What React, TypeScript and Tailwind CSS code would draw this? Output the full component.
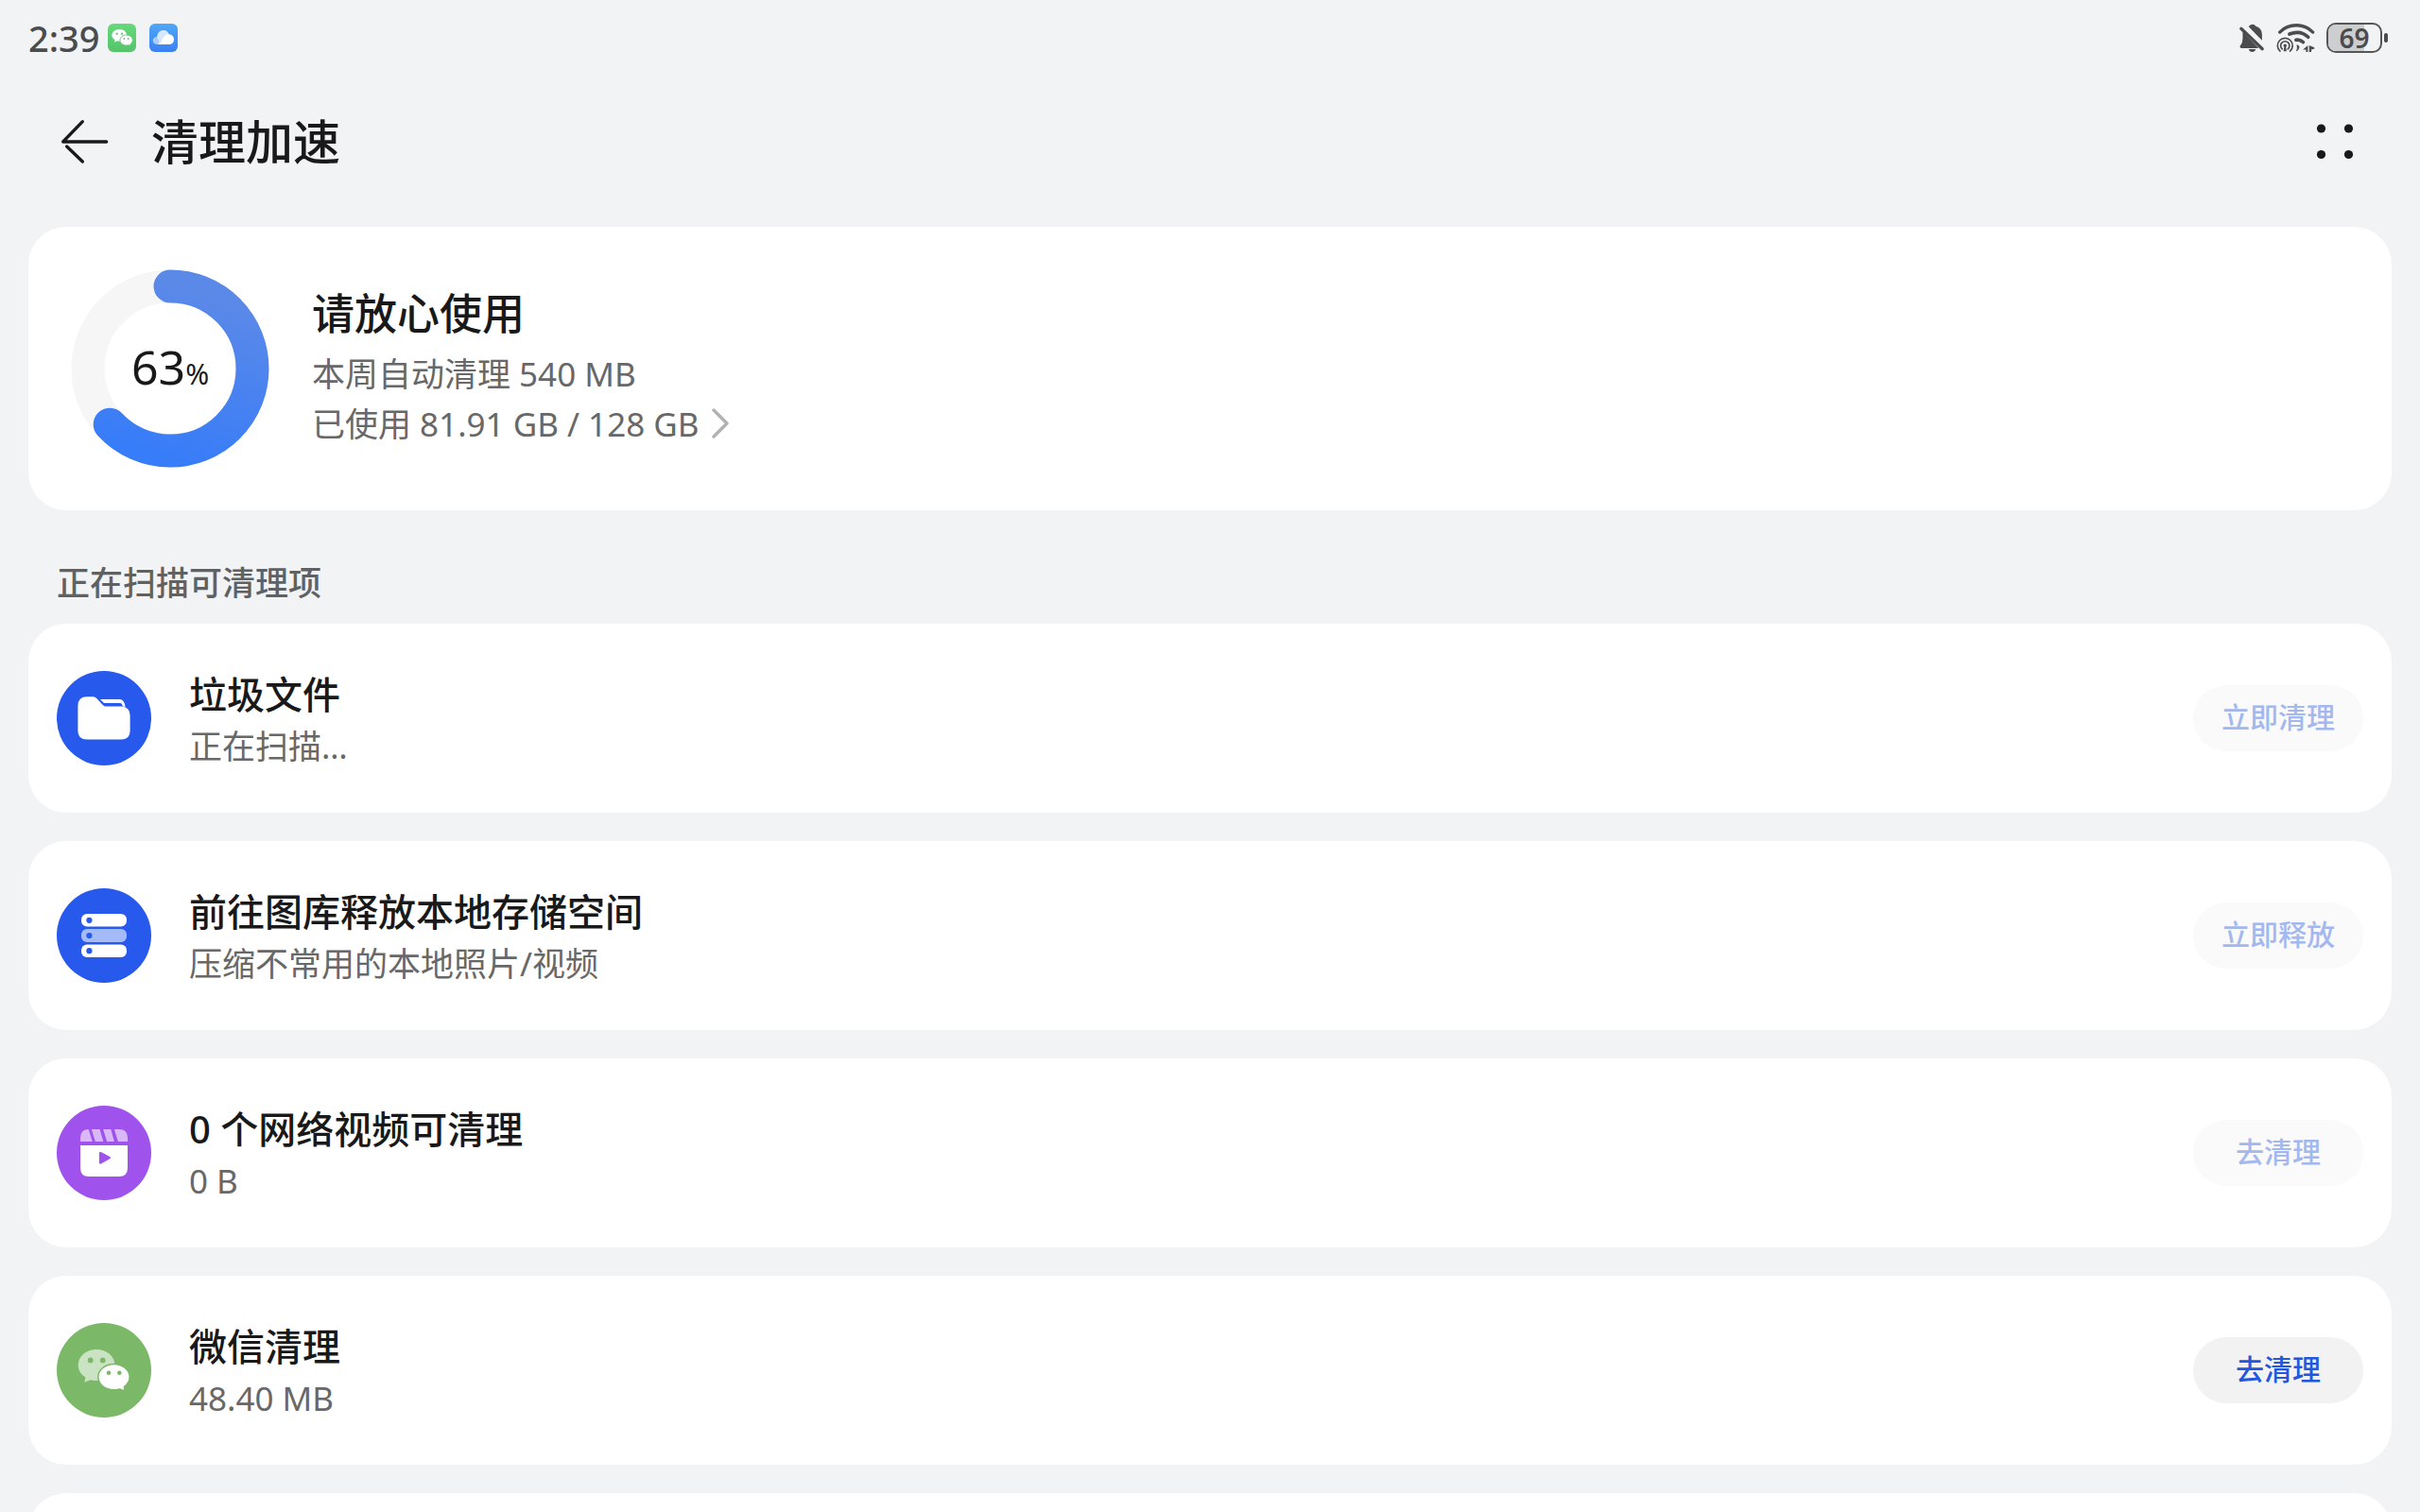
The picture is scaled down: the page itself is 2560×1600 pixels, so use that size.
import React from 'react';

const RING_RADIUS = 87;
const RING_LENGTH = 2 * Math.PI * RING_RADIUS;
const USED_PERCENT = 63;

type CleanItem = {
  title: string;
  detail: string;
  action: string;
  disabled: boolean;
  icon: React.ReactNode;
};

const ITEMS: CleanItem[] = [
  { title: '垃圾文件', detail: '正在扫描…', action: '立即清理', disabled: true, icon: <FolderIcon /> },
  { title: '前往图库释放本地存储空间', detail: '压缩不常用的本地照片/视频', action: '立即释放', disabled: true, icon: <StorageIcon /> },
  { title: '0 个网络视频可清理', detail: '0 B', action: '去清理', disabled: true, icon: <VideoIcon /> },
  { title: '微信清理', detail: '48.40 MB', action: '去清理', disabled: false, icon: <ChatIcon /> }];


function FolderIcon() {
  return (
    <svg viewBox="0 0 100 100" className="size-[100px] shrink-0" aria-hidden="true">
      <circle cx="50" cy="50" r="50" fill="#2759ec" />
      <path d="M46 30H66.5Q71.5 30 72.5 38L69.8 37.4Q69.5 34 66.5 34H50Z" fill="#fff" />
      <path d="M32 27.3H38.5Q40.5 27.3 42 28.8L49 36.2Q50.3 37.4 52 37.4H69Q77.6 38.5 77.6 47V63.5Q77.6 72.6 68 72.6H32Q22.4 72.6 22.4 63.5V37Q22.4 27.3 32 27.3Z" fill="#fff" />
    </svg>);

}

function StorageIcon() {
  return (
    <svg viewBox="0 0 100 100" className="size-[100px] shrink-0" aria-hidden="true">
      <circle cx="50" cy="50" r="50" fill="#2759ec" />
      <rect x="26" y="27" width="48" height="13.5" rx="6" fill="#fff" />
      <rect x="26" y="43" width="48" height="14" rx="6" fill="#a5bbf7" />
      <rect x="26" y="59.5" width="48" height="13.5" rx="6" fill="#fff" />
      <circle cx="34.4" cy="33.8" r="3.1" fill="#2759ec" />
      <circle cx="34.4" cy="50" r="3.1" fill="#2759ec" />
      <circle cx="34.4" cy="66.2" r="3.1" fill="#2759ec" />
    </svg>);

}

function VideoIcon() {
  return (
    <svg viewBox="0 0 100 100" className="size-[100px] shrink-0" aria-hidden="true">
      <circle cx="50" cy="50" r="50" fill="#a052ec" />
      <path d="M25 38V34Q25 25 34 25H66Q75 25 75 34V38Z" fill="#d9b8f8" />
      <path d="M33.4 24L36.5 24L41.2 39H38Z M45.2 24H48.8L53.5 39H49.6Z M57 24H60.6L65.2 39H61.2Z" fill="#a052ec" />
      <path d="M25 42H75V66Q75 75 66 75H34Q25 75 25 66Z" fill="#fff" />
      <path d="M46.2 50.2L55.6 55.2L46.2 60.4Z" fill="#a052ec" stroke="#a052ec" strokeWidth="2.6" strokeLinejoin="round" />
    </svg>);

}

function ChatIcon() {
  return (
    <svg viewBox="0 0 100 100" className="size-[100px] shrink-0" aria-hidden="true">
      <circle cx="50" cy="50" r="50" fill="#7bb969" />
      <path d="M42 28C52.8 28 61.5 35.3 61.5 44.5S52.8 61 42 61Q38.5 61 35.5 60.2L29.3 62.8L30.5 57.5C25.5 54.5 22.7 49.8 22.7 44.5C22.7 35.3 31.2 28 42 28Z" fill="#cae4c3" />
      <circle cx="35.7" cy="39.4" r="2.9" fill="#7bb969" />
      <circle cx="48.7" cy="39.4" r="2.9" fill="#7bb969" />
      <path d="M60.5 43.5C69.7 43.5 77.2 49.6 77.2 57.2Q77.2 63.4 71.5 67.3L71.8 72L66.2 69.9Q63.5 70.9 60.5 70.9C51.3 70.9 43.8 64.8 43.8 57.2S51.3 43.5 60.5 43.5Z" fill="#fff" stroke="#7bb969" strokeWidth="1.6" />
      <circle cx="55" cy="52.7" r="2.3" fill="#7bb969" />
      <circle cx="66.3" cy="52.7" r="2.3" fill="#7bb969" />
    </svg>);

}

function WeChatBadge() {
  return (
    <svg viewBox="0 0 90 90" className="size-[30px]" aria-hidden="true">
      <defs>
        <linearGradient id="wechat" x1="0" y1="0" x2="0" y2="1">
          <stop offset="0" stopColor="#66d97c" />
          <stop offset="1" stopColor="#56c36b" />
        </linearGradient>
      </defs>
      <rect width="90" height="90" rx="18" fill="url(#wechat)" />
      <path d="M37 18C50 18 60 26 60 37S50 56 37 56Q33 56 30 55L21 59L23 52Q13 46 13 37C13 26 24 18 37 18Z" fill="#fff" />
      <path d="M59 36C70 36 79 43 79 53Q79 60 72 65L72 70L66 68Q63 69 59 69C48 69 39 62 39 53S48 36 59 36Z" fill="#fff" stroke="#5ecd73" strokeWidth="3" />
      <g fill="#5ecd73">
        <circle cx="29" cy="32" r="3.5" />
        <circle cx="45" cy="32" r="3.5" />
        <circle cx="52" cy="48" r="2.8" />
        <circle cx="65" cy="48" r="2.8" />
      </g>
    </svg>);

}

function CloudBadge() {
  return (
    <svg viewBox="0 0 90 90" className="size-[30px]" aria-hidden="true">
      <defs>
        <linearGradient id="cloud" x1="0" y1="0" x2="0" y2="1">
          <stop offset="0" stopColor="#4fa8f6" />
          <stop offset="1" stopColor="#3a80f4" />
        </linearGradient>
      </defs>
      <rect width="90" height="90" rx="18" fill="url(#cloud)" />
      <path d="M24 66C16 65 11 60 11 53Q12 43 24 42L36 54L30 66Z" fill="#a9cdfb" />
      <path d="M24 44C25 30 33 21 44 21C54 21 61 27 62 35L40 66H28Q34 54 24 44Z" fill="#d6e8fd" />
      <path d="M29 66C42 64 38 36 61 34C72 34 78 42 78 50C78 60 71 66 62 66Z" fill="#fff" />
    </svg>);

}

function MutedBellIcon() {
  return (
    <svg viewBox="24 28 84 94" className="h-[31px] w-7" role="img" aria-label="静音">
      <g fill="#4b4c4d">
        <path d="M37 54L88 107H32Q25 103 30 98Q37 90 37 76Z" />
        <path d="M56 38Q60 30 68 30Q76 30 79 36Q99 42 99 62V82Z" />
        <path d="M56 110H79Q76 119 67.5 119Q59 119 56 110Z" />
      </g>
      <path d="M32 44L100 109" stroke="#4b4c4d" strokeWidth="10" strokeLinecap="round" />
    </svg>);

}

function WifiIcon() {
  return (
    <svg viewBox="140 24 124 96" className="h-8 w-[41px]" role="img" aria-label="WLAN">
      <g fill="none" stroke="#4b4c4d" strokeLinecap="round">
        <path d="M151 54Q172 32 204 32T257 54" strokeWidth="10" />
        <path d="M182 60Q218 46 242 70" strokeWidth="11" />
        <path d="M203 79Q215 77 226 86" strokeWidth="11" />
        <path d="M152 115A24 24 0 1 1 184 115" strokeWidth="5" />
        <path d="M159 108A14 14 0 1 1 177 108" strokeWidth="5" />
      </g>
      <g fill="#4b4c4d">
        <circle cx="168" cy="97" r="5" />
        <path d="M166 97H170L173 115H163Z" />
        <path d="M205 94Q219 97 211 110Q207 115 203 116Q209 106 205 94Z" />
        <path d="M241 96V117H235V110H225Z" />
        <path d="M245 96L262 103V107L252 110V117H245Z" />
      </g>
    </svg>);

}

function Battery({ level }: { level: number; }) {
  return (
    <div className="flex items-center gap-0.5">
      <div className="relative flex h-8 w-[59px] items-center justify-center rounded-[10px] border-2 border-[#555657]">
        <div className="absolute inset-y-0 left-0 rounded-l-lg bg-[#cccecf]" style={{ width: `${level}%` }} />
        <span className="relative text-[28px] leading-7 font-semibold">{level}</span>
      </div>
      <div className="h-2.5 w-1 rounded-sm bg-[#4b4c4d]" />
    </div>);

}

function UsageRing() {
  return (
    <div className="relative size-[210px] shrink-0">
      <svg viewBox="0 0 210 210" className="size-full" aria-hidden="true">
        <defs>
          <linearGradient id="usage" x1="0.6" y1="0" x2="0.3" y2="1">
            <stop offset="0" stopColor="#5b89e8" />
            <stop offset="1" stopColor="#377cf8" />
          </linearGradient>
        </defs>
        <circle cx="105" cy="105" r={RING_RADIUS} fill="none" stroke="#f6f6f7" strokeWidth="35" />
        <path
          d="M105 18A87 87 0 0 1 105 192A87 87 0 0 1 105 18"
          fill="none"
          stroke="url(#usage)"
          strokeWidth="35"
          strokeLinecap="round"
          strokeDasharray={`${RING_LENGTH * USED_PERCENT / 100} ${RING_LENGTH}`} />

      </svg>
      <p className="absolute inset-0 flex items-center justify-center pt-1 text-[#191919]">
        <span className="flex items-baseline">
          <span className="text-[50px] leading-[60px]">{USED_PERCENT}</span>
          <span className="text-[30px] leading-[60px]">%</span>
        </span>
      </p>
    </div>);

}

function CleanCard({ title, detail, action, disabled, icon }: CleanItem) {
  return (
    <li className="flex shrink-0 items-center gap-10 rounded-[40px] bg-white px-[30px] py-[45px]">
      {icon}
      <div className="min-w-0 flex-1">
        <h3 className="text-[40px] leading-[60px] font-medium text-[#191919]">{title}</h3>
        <p className="text-[35px] leading-[50px] text-[#686868]">{detail}</p>
      </div>
      <button
        type="button"
        disabled={disabled}
        className={`h-[70px] w-[180px] shrink-0 rounded-full pb-0.5 text-[30px] leading-10 font-medium ${disabled ? 'bg-[#fafafa] text-[#a4b8f0]' : 'bg-[#f2f2f3] text-[#2456de]'}`
        }>

        {action}
      </button>
    </li>);

}

export default function App() {
  return (
    <div className="flex h-screen flex-col overflow-hidden bg-[#f1f3f5] font-['Noto_Sans','Noto_Sans_CJK_SC',sans-serif]">
      <div className="flex h-20 shrink-0 items-center justify-between pr-[34px] pl-[30px] text-[#4b4c4d]">
        <div className="flex items-center">
          <span className="mr-2 text-[38px] leading-10 font-medium">2:39</span>
          <div className="flex items-center gap-3.5">
            <WeChatBadge />
            <CloudBadge />
          </div>
        </div>
        <div className="flex items-center gap-3">
          <MutedBellIcon />
          <WifiIcon />
          <Battery level={69} />
        </div>
      </div>

      <header className="flex h-[140px] shrink-0 items-center justify-between px-[60px]">
        <div className="flex items-center gap-10">
          <button type="button" aria-label="返回">
            <svg viewBox="180 375 180 150" className="h-[50px] w-[60px]" aria-hidden="true">
              <path d="M262 386L200 450H338M212 465L262 513" fill="none" stroke="#191919" strokeWidth="10" strokeLinecap="round" strokeLinejoin="round" />
            </svg>
          </button>
          <h1 className="text-[50px] leading-[60px] font-medium text-[#191919]">清理加速</h1>
        </div>
        <button type="button" aria-label="更多">
          <svg viewBox="0 0 60 50" className="h-[50px] w-[60px]" fill="#191919" aria-hidden="true">
            <circle cx="15.5" cy="11" r="4.6" />
            <circle cx="44.5" cy="11" r="4.6" />
            <circle cx="15.5" cy="38.5" r="4.6" />
            <circle cx="44.5" cy="38.5" r="4.6" />
          </svg>
        </button>
      </header>

      <main className="flex min-h-0 flex-1 flex-col px-[30px] pt-5">
        <section className="flex h-[300px] shrink-0 items-center gap-[45px] rounded-[40px] bg-white px-[45px]">
          <UsageRing />
          <div className="pb-3">
            <h2 className="text-[45px] leading-[75px] font-medium text-[#191919]">请放心使用</h2>
            <p className="text-[35px] leading-[53px] text-[#686868]">本周自动清理 540 MB</p>
            <a href="#storage" className="flex items-center gap-3 text-[35px] leading-[53px] text-[#686868]">
              已使用 81.91 GB / 128 GB
              <svg viewBox="0 0 20 34" className="h-[34px] w-5" fill="none" stroke="#b2b2b2" strokeWidth="3.5" strokeLinecap="round" strokeLinejoin="round" aria-hidden="true">
                <path d="M3 3L17 17L3 31" />
              </svg>
            </a>
          </div>
        </section>

        <h2 className="shrink-0 px-[30px] pt-[52px] pb-[18px] text-[35px] leading-[50px] font-medium text-[#606162]">正在扫描可清理项</h2>

        <ul className="flex min-h-0 flex-1 flex-col gap-[30px] overflow-hidden">
          {ITEMS.map((item) =>
            <CleanCard key={item.title} {...item} />
          )}
          <li className="h-[200px] shrink-0 rounded-[40px] bg-white" aria-hidden="true" />
        </ul>
      </main>
    </div>);

}
